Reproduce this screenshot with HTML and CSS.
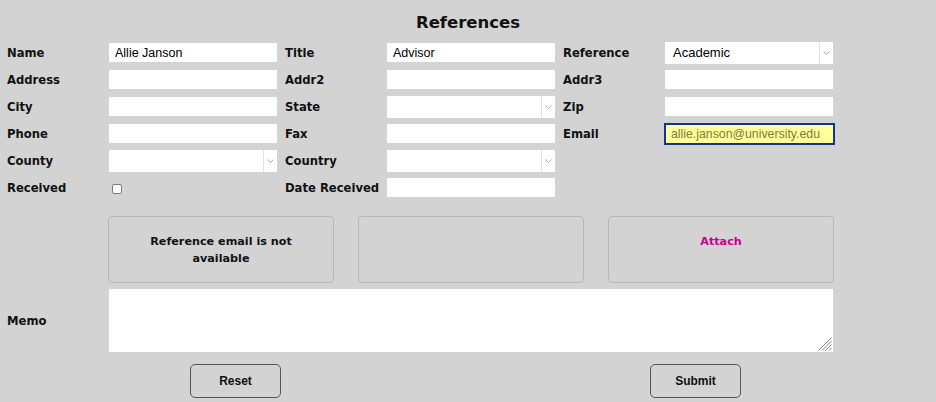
FILE: index.html
```html
<!DOCTYPE html>
<html>
<head>
<meta charset="utf-8">
<link rel="stylesheet" href="styles.css">
</head>
<body>
<div class="page">
  <h1 class="title">References</h1>
  <div class="form">
    <label class="lbl">Name</label>
    <div class="field"><input class="inp" type="text" value="Allie Janson"></div>
    <label class="lbl">Title</label>
    <div class="field"><input class="inp" type="text" value="Advisor"></div>
    <label class="lbl">Reference</label>
    <div class="field"><div class="sel"><span class="sel-text">Academic</span><span class="sel-arrow"><svg width="7" height="4" viewBox="0 0 7 4"><path d="M0.5 0.5 L3.5 3.5 L6.5 0.5" stroke="#a8a8a8" fill="none"/></svg></span></div></div>

    <label class="lbl">Address</label>
    <div class="field"><input class="inp" type="text"></div>
    <label class="lbl">Addr2</label>
    <div class="field"><input class="inp" type="text"></div>
    <label class="lbl">Addr3</label>
    <div class="field"><input class="inp" type="text"></div>

    <label class="lbl">City</label>
    <div class="field"><input class="inp" type="text"></div>
    <label class="lbl">State</label>
    <div class="field"><div class="sel"><span class="sel-text"></span><span class="sel-arrow"><svg width="7" height="4" viewBox="0 0 7 4"><path d="M0.5 0.5 L3.5 3.5 L6.5 0.5" stroke="#a8a8a8" fill="none"/></svg></span></div></div>
    <label class="lbl">Zip</label>
    <div class="field"><input class="inp" type="text"></div>

    <label class="lbl">Phone</label>
    <div class="field"><input class="inp" type="text"></div>
    <label class="lbl">Fax</label>
    <div class="field"><input class="inp" type="text"></div>
    <label class="lbl">Email</label>
    <div class="field"><input class="inp email" type="text" value="allie.janson@university.edu"></div>

    <label class="lbl">County</label>
    <div class="field"><div class="sel"><span class="sel-text"></span><span class="sel-arrow"><svg width="7" height="4" viewBox="0 0 7 4"><path d="M0.5 0.5 L3.5 3.5 L6.5 0.5" stroke="#a8a8a8" fill="none"/></svg></span></div></div>
    <label class="lbl">Country</label>
    <div class="field"><div class="sel"><span class="sel-text"></span><span class="sel-arrow"><svg width="7" height="4" viewBox="0 0 7 4"><path d="M0.5 0.5 L3.5 3.5 L6.5 0.5" stroke="#a8a8a8" fill="none"/></svg></span></div></div>
    <div></div>
    <div></div>

    <label class="lbl">Received</label>
    <div class="field"><input class="chk" type="checkbox"></div>
    <label class="lbl">Date Received</label>
    <div class="field"><input class="inp" type="text"></div>
    <div></div>
    <div></div>
  </div>

  <div class="boxes">
    <div class="box">Reference email is not<br>available</div>
    <div class="box"></div>
    <div class="box attach">Attach</div>
  </div>

  <div class="memo-row">
    <label class="lbl">Memo</label>
    <div class="memo-wrap">
      <textarea class="memo"></textarea>
      <svg class="grip" width="15" height="15" viewBox="0 0 15 15"><path d="M14.5 1.5 L1.5 14.5 M14.5 5 L5 14.5 M14.5 8.5 L8.5 14.5 M14.5 12 L12 14.5" stroke="#808080" stroke-width="1" fill="none"/></svg>
    </div>
  </div>

  <div class="actions">
    <button class="btn">Reset</button>
    <button class="btn">Submit</button>
  </div>
</div>
</body>
</html>
```

FILE: styles.css
```css
html, body {
  margin: 0;
  padding: 0;
  background: #d3d3d3;
}
.page {
  width: 936px;
  height: 402px;
  overflow: hidden;
  font-family: "DejaVu Sans", sans-serif;
  color: #111;
}
.title {
  margin: 0;
  padding-top: 13px;
  height: 20px;
  line-height: 20px;
  font-size: 16.5px;
  font-weight: bold;
  text-align: center;
}
.form {
  margin-top: 6px;
  padding-left: 7px;
  display: grid;
  grid-template-columns: 102px 176px 102px 176px 102px 168px;
  grid-auto-rows: 27px;
  align-items: center;
}
.lbl {
  font-size: 11.6px;
  font-weight: bold;
  white-space: nowrap;
}
.field {
  display: flex;
  align-items: center;
  height: 27px;
}
.inp {
  box-sizing: border-box;
  width: 168px;
  height: 19px;
  border: none;
  outline: none;
  background: #fff;
  padding: 0 6px;
  margin: 0;
  font-family: "Liberation Sans", Arial, sans-serif;
  font-size: 12.5px;
  color: #000;
}
.inp.email {
  width: 171px;
  height: 22px;
  margin-left: -1px;
  border: 2px solid #12348c;
  background: #ffff9e;
  color: #7d7d35;
  padding: 0 5px;
  font-size: 12.3px;
}
.sel {
  box-sizing: border-box;
  width: 168px;
  height: 22px;
  background: #fff;
  display: flex;
  align-items: center;
}
.sel-text {
  flex: 1;
  padding-left: 8px;
  font-family: "Liberation Sans", Arial, sans-serif;
  font-size: 13px;
  color: #000;
}
.sel-arrow {
  width: 13px;
  height: 22px;
  border-left: 1px solid #e2e2e2;
  display: flex;
  align-items: center;
  justify-content: center;
}
.chk {
  appearance: none;
  -webkit-appearance: none;
  box-sizing: border-box;
  width: 10px;
  height: 10px;
  margin: 2px 0 0 3px;
  border: 1px solid #7a7a7a;
  border-radius: 2px;
  background: #fff;
}
.boxes {
  margin-top: 15px;
  padding-left: 108px;
  display: flex;
  gap: 24px;
}
.box {
  box-sizing: border-box;
  width: 226px;
  height: 67px;
  border: 1px solid #b7b7b7;
  border-radius: 4px;
  padding-top: 16px;
  text-align: center;
  font-size: 11.2px;
  font-weight: bold;
  line-height: 17px;
}
.box.attach {
  color: #c8008a;
}
.memo-row {
  margin-top: 6px;
  padding-left: 7px;
  display: grid;
  grid-template-columns: 102px 724px;
  align-items: center;
}
.memo-wrap {
  position: relative;
  width: 724px;
  height: 63px;
}
.memo {
  box-sizing: border-box;
  width: 724px;
  height: 63px;
  border: none;
  outline: none;
  background: #fff;
  margin: 0;
  display: block;
  resize: none;
}
.grip {
  position: absolute;
  right: 1px;
  bottom: 1px;
}
.actions {
  margin-top: 12px;
  padding-left: 190px;
  display: flex;
  gap: 369px;
}
.btn {
  box-sizing: border-box;
  width: 91px;
  height: 34px;
  background: #d3d3d3;
  border: 1px solid #555;
  border-radius: 5px;
  font-family: "Liberation Sans", Arial, sans-serif;
  font-size: 12px;
  font-weight: bold;
  color: #111;
  padding: 0;
}
```
